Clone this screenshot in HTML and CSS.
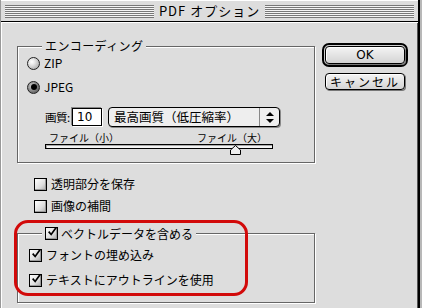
FILE: index.html
```html
<!DOCTYPE html>
<html lang="ja">
<head>
<meta charset="utf-8">
<title>PDF オプション</title>
<link rel="stylesheet" href="styles.css">
</head>
<body>
<div class="window">
  <div class="titlebar">
    <div class="stripes"></div>
    <div class="title">PDF オプション</div>
    <div class="stripes"></div>
  </div>
  <div class="content">
    <div class="leftcol">
      <div class="group g1">
        <div class="legend">エンコーディング</div>
        <div class="row r-zip"><span class="radio"></span><span class="lbl">ZIP</span></div>
        <div class="row r-jpeg"><span class="radio on"><span class="dot"></span></span><span class="lbl">JPEG</span></div>
        <div class="quality">
          <span class="qlabel">画質:</span>
          <span class="qinput">10</span>
          <span class="select"><span class="seltext">最高画質（低圧縮率）</span><span class="selarrow"><svg width="8" height="11" viewBox="0 0 8 11"><path d="M4 0 L8 4 L0 4 Z M0 7 L8 7 L4 11 Z" fill="#000"/></svg></span></span>
        </div>
        <div class="slider">
          <div class="slabels"><span>ファイル（小）</span><span>ファイル（大）</span></div>
          <div class="track"></div>
          <svg class="thumb" width="11" height="10" viewBox="0 0 11 10"><path d="M5.5 0.5 L10.5 5 L10.5 9.5 L0.5 9.5 L0.5 5 Z" fill="#eee" stroke="#000"/></svg>
        </div>
      </div>
      <div class="row c1"><span class="check"></span><span class="lbl">透明部分を保存</span></div>
      <div class="row c2"><span class="check"></span><span class="lbl">画像の補間</span></div>
      <div class="group g2">
        <div class="legend2"><span class="check on"><svg width="12" height="12" viewBox="0 0 12 12"><path d="M2 5.5 L5 9 L11 0.5" fill="none" stroke="#000" stroke-width="2"/></svg></span><span class="lbl">ベクトルデータを含める</span></div>
        <div class="row c3"><span class="check on"><svg width="12" height="12" viewBox="0 0 12 12"><path d="M2 5.5 L5 9 L11 0.5" fill="none" stroke="#000" stroke-width="2"/></svg></span><span class="lbl">フォントの埋め込み</span></div>
        <div class="row c4"><span class="check on"><svg width="12" height="12" viewBox="0 0 12 12"><path d="M2 5.5 L5 9 L11 0.5" fill="none" stroke="#000" stroke-width="2"/></svg></span><span class="lbl">テキストにアウトラインを使用</span></div>
      </div>
      <div class="highlight"></div>
    </div>
    <div class="rightcol">
      <div class="defring"><button class="btn okbtn">OK</button></div>
      <button class="btn cancel">キャンセル</button>
    </div>
  </div>
</div>
</body>
</html>
```
FILE: styles.css
```css
* { box-sizing: border-box; }
html, body { margin: 0; padding: 0; }
body {
  width: 422px; height: 308px; overflow: hidden;
  background: #b8b8b8;
  font-family: "Noto Sans CJK JP", "Liberation Sans", sans-serif;
  font-size: 12px; color: #000;
}
.window {
  width: 420px; height: 308px;
  background: #dddddd;
  border-right: 2px solid #000;
  box-shadow: inset -1px 0 0 #555;
  border-left: 1px solid #999;
  display: flex; flex-direction: column;
}
.titlebar {
  height: 22px; flex: none;
  border-bottom: 1px solid #000;
  background: #dddddd;
  display: flex; align-items: center;
  padding: 0 4px 0 4px;
  box-shadow: inset 0 1px 0 #fff;
}
.stripes {
  flex: 1; height: 13px; margin-top: 1px;
  background: repeating-linear-gradient(to bottom, #777 0, #777 1px, #f4f4f4 1px, #f4f4f4 2px);
}
.title {
  padding: 0 5px; font-size: 13px; line-height: 18px; letter-spacing: 1px;
}
.content {
  flex: 1; display: flex; padding-left: 16px; gap: 7px;
  box-shadow: inset 0 1px 0 #fff, inset 1px 0 0 #fff;
}
.leftcol { position: relative; width: 298px; }
/* group box: etched border; legend sits on the top edge via negative margin */
.group {
  border: 1px solid #666;
  box-shadow: 1px 1px 0 #fff, inset 1px 1px 0 #fff;
}
.g1 { margin-top: 24px; height: 117px; padding: 0 0 0 9px; }
.legend {
  width: max-content; margin: -9px 0 0 15px; padding: 0 3px;
  line-height: 16px; height: 16px; letter-spacing: 0.4px; background: #dddddd;
}
.row { display: flex; align-items: center; height: 16px; line-height: 16px; white-space: nowrap; }
.lbl { margin-left: 4px; }
.r-zip { margin-top: 1px; }
.r-jpeg { margin-top: 8px; }
.radio {
  width: 13px; height: 13px; border-radius: 50%;
  border: 1px solid #222;
  background: radial-gradient(circle at 35% 35%, #fff 0, #e6e6e6 30%, #999 100%);
  display: flex; align-items: center; justify-content: center;
}
.radio.on { background: radial-gradient(circle at 35% 35%, #ccc 0, #777 60%, #444 100%); }
.dot { width: 6px; height: 6px; border-radius: 50%; background: #000; }
.quality {
  display: flex; align-items: center; height: 20px; margin-top: 12px; margin-left: 18px; white-space: nowrap;
}
.qlabel { width: 27px; flex: none; font-size: 11.5px; letter-spacing: -0.5px; }
.qinput {
  width: 30px; height: 18px; flex: none; background: #fff; border: 1px solid #000;
  box-shadow: -1px -1px 0 #888, 1px 1px 0 #fff;
  padding-left: 4px; line-height: 16px; font-family: "DejaVu Sans", sans-serif; font-size: 12px;
}
.select {
  margin-left: 6px; width: 172px; height: 20px; flex: none;
  border: 1px solid #000; border-radius: 4px;
  background: #eee; box-shadow: 1px 1px 0 #888;
  display: flex; align-items: center;
}
.seltext { flex: 1; padding-left: 5px; font-size: 12.5px; line-height: 18px; }
.selarrow {
  width: 20px; height: 18px; border-left: 1px solid #888;
  display: flex; align-items: center; justify-content: center;
}
.slider { position: relative; margin-left: 18px; width: 228px; margin-top: 5px; }
.slabels {
  display: flex; justify-content: space-between;
  font-size: 10px; line-height: 12px; height: 12px; padding: 0 6px 0 4px;
}
.track { height: 5px; border: 1px solid #000; background: #f4f4f4; box-shadow: inset 1px 1px 0 #aaa; }
.thumb { position: absolute; left: 185px; top: 13px; }
.c1 { margin-top: 13px; margin-left: 17px; }
.c2 { margin-top: 6px; margin-left: 17px; }
.check {
  width: 13px; height: 13px; flex: none;
  border: 1px solid #000;
  background: linear-gradient(135deg, #fff 0, #ddd 60%, #aaa 100%);
  box-shadow: inset -1px -1px 0 #999;
  display: flex; align-items: center; justify-content: center;
}
.check svg { display: block; margin-top: -2px; margin-left: 1px; }
.g2 { margin-top: 19px; height: 70px; padding: 0 0 0 11px; }
.legend2 {
  width: max-content; display: flex; align-items: center; margin: -9px 0 0 13px; padding: 0 3px;
  height: 16px; white-space: nowrap; background: #dddddd;
}
.legend2 .lbl { margin-left: 3px; }
.c3 { margin-top: 6px; }
.c4 { margin-top: 9px; }
.highlight {
  position: absolute; left: -3px; top: 198px; width: 234px; height: 76px;
  border: 3px solid #d20a0a; border-radius: 14px;
}
.rightcol { width: 86px; padding-top: 21px; display: flex; flex-direction: column; align-items: center; }
.btn {
  font-family: "Noto Sans CJK JP", "Liberation Sans", sans-serif; font-size: 12px;
  border: 1px solid #000; border-radius: 4px;
  background: linear-gradient(#f4f4f4, #d4d4d4);
  box-shadow: 1px 1px 0 #777, inset 1px 1px 0 #fff;
  padding: 0; margin: 0; color: #000; line-height: 14px;
}
.defring {
  width: 86px; height: 24px; border: 2px solid #000; border-radius: 7px; padding: 1px;
  background: #ccc;
}
.okbtn { width: 80px; height: 18px; display: block; font-family: "DejaVu Sans", sans-serif; font-size: 12px; }
.cancel { width: 80px; height: 17px; margin-top: 6px; letter-spacing: 2px; }
```
